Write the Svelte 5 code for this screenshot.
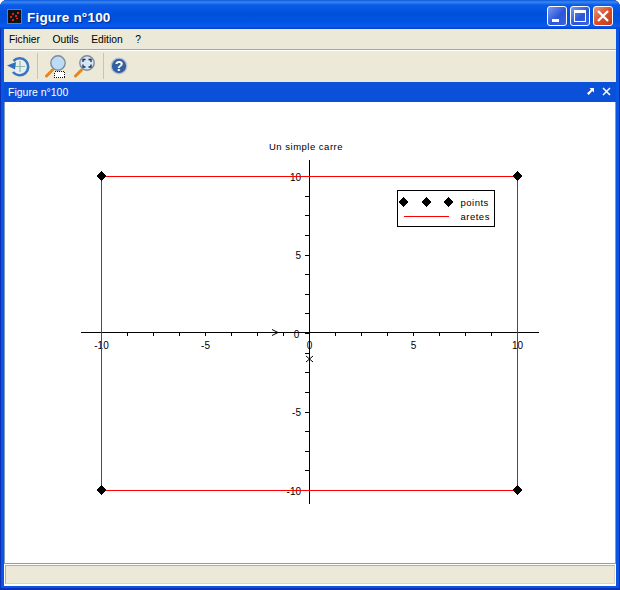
<script>
  const menus = ['Fichier', 'Outils', 'Edition', '?'];
  const X = (v) => 309.5 + v * 20.8;
  const Y = (v) => 333 - v * 15.7;
  const xTicks = [];
  const yTicks = [];
  for (let i = -8; i <= 8; i++) {
    xTicks.push(309 + i * 26);
    yTicks.push(Math.round(333 + i * 19.625));
  }
  const xLabels = [-10, -5, 0, 5, 10];
  const yLabels = [10, 5, 0, -5, -10];
  const corners = [[101, 176], [517, 176], [101, 490], [517, 490]];
  const legendPts = [403, 426, 448];
  const diamond = (x, y) => `${x},${y - 5} ${x + 4.7},${y} ${x},${y + 5} ${x - 4.7},${y}`;
</script>

<div class="window">
  <header class="titlebar">
    <svg class="appicon" viewBox="0 0 15 15" width="15" height="15">
      <rect width="15" height="15" fill="#111" />
      <rect x="0.5" y="0.5" width="14" height="14" fill="none" stroke="#778" />
      <g fill="#d22">
        <rect x="3" y="7" width="2" height="2" /><rect x="5" y="4" width="2" height="2" />
        <rect x="8" y="6" width="2" height="2" /><rect x="10" y="3" width="2" height="2" />
        <rect x="5" y="10" width="2" height="2" /><rect x="9" y="9" width="2" height="1" />
      </g>
    </svg>
    <span class="wintitle">Figure n°100</span>
    <div class="winbtns">
      <div class="wb blue">
        <svg viewBox="0 0 18 18" width="18" height="18"><rect x="4" y="12" width="7" height="3" fill="#fff" /></svg>
      </div>
      <div class="wb blue">
        <svg viewBox="0 0 18 18" width="18" height="18"><rect x="3.5" y="3.5" width="11" height="11" fill="none" stroke="#fff" /><rect x="3" y="3" width="12" height="3" fill="#fff" /></svg>
      </div>
      <div class="wb red">
        <svg viewBox="0 0 18 18" width="18" height="18"><path d="M4 4 L14 14 M14 4 L4 14" stroke="#fff" stroke-width="2.4" /></svg>
      </div>
    </div>
  </header>

  <div class="inner">
    <nav class="menubar">
      {#each menus as m}<span class="menu">{m}</span>{/each}
    </nav>

    <div class="toolbar">
      <svg class="tool undo" viewBox="0 0 23 23" width="23" height="23">
        <circle cx="13" cy="11.5" r="8" fill="#e6eff2" />
        <path d="M13 6v11M8 11.5h10" stroke="#8fb5a8" stroke-width="1.2" />
        <path d="M6.5 6 A8.5 8.5 0 1 1 6 17" fill="none" stroke="#3d74c0" stroke-width="2.6" />
        <path d="M0 10.5 L9 7 L8 14.5 Z" fill="#2e6ec0" />
      </svg>
      <div class="sep"></div>
      <svg class="tool mag" viewBox="0 0 22 24" width="22" height="24">
        <path d="M1.5 22 L7.5 16" stroke="#e8841c" stroke-width="3" stroke-linecap="round" />
        <circle cx="13" cy="9" r="7.2" fill="#bcdcf6" stroke="#7d8b98" stroke-width="1.4" />
        <rect x="9.5" y="17.5" width="10" height="6" fill="#fff" stroke="#111" stroke-dasharray="1 1" class="crisp" />
      </svg>
      <svg class="tool mag2" viewBox="0 0 22 24" width="22" height="24">
        <path d="M1.5 22 L7.5 16" stroke="#e8841c" stroke-width="3" stroke-linecap="round" />
        <circle cx="13" cy="9" r="7.2" fill="#d4e6f4" stroke="#7d8b98" stroke-width="1.4" />
        <path d="M9 8V5.5h2.5M14.5 5.5H17V8M17 10.5V13h-2.5M11.5 13H9v-2.5" fill="none" stroke="#14285a" stroke-width="1.3" />
      </svg>
      <div class="sep second"></div>
      <svg class="tool help" viewBox="0 0 18 18" width="18" height="18">
        <circle cx="9" cy="9" r="7.8" fill="#34609f" stroke="#b4c4d8" stroke-width="1.3" />
        <text x="9" y="14" class="q">?</text>
      </svg>
    </div>

    <div class="paneltitle">
      <span>Figure n°100</span>
      <div class="panelicons">
        <svg viewBox="0 0 8 8" width="7" height="7"><path d="M3 0h5v5L6 3.5 2 8 0 6l4.5-4z" fill="#fff" /></svg>
        <svg viewBox="0 0 9 9" width="9" height="9"><path d="M1 1l7 7M8 1L1 8" stroke="#fff" stroke-width="1.5" /></svg>
      </div>
    </div>

    <div class="canvas">
      <svg class="plot" width="610" height="461" viewBox="5 102 610 461">
        <g class="crisp" stroke="#000" fill="none">
          <path d="M81 332.5H539M309.5 160V504" />
          {#each xTicks as x}<path d="M{x + 0.5} 333v3" />{/each}
          {#each yTicks as y}<path d="M305 {y + 0.5}h4" />{/each}
        </g>
        <g>
          <text x="296.5" y="338" text-anchor="middle" class="n">0</text>
          <path class="arrow" d="M272 329.5l6 3-6 3M278 332.5h2" />
          {#each xLabels as v}
            <text x={X(v)} y="349" text-anchor="middle" class="n">{v}</text>
          {/each}
          {#each yLabels as v}
            {#if v !== 0}
              <text x="301" y={Y(v) + 4.5} text-anchor="end" class="n">{v}</text>
            {/if}
          {/each}
          <path class="arrow" d="M306 356l3.5 3 3.5-3M306 362l3.5-3 3.5 3" />
          <text x="306" y="150" text-anchor="middle" class="s">Un simple carre</text>
        </g>
        <rect class="crisp" x="101.5" y="176.5" width="416" height="314" fill="none" stroke="#f00" />
        {#each corners as c}
          <polygon class="crisp" points={diamond(c[0] + 0.5, c[1])} fill="#000" />
        {/each}
        <rect class="crisp" x="397.5" y="190.5" width="97" height="36" fill="#fff" stroke="#000" />
        {#each legendPts as x}
          <polygon class="crisp" points={diamond(x + 0.5, 202)} fill="#000" />
        {/each}
        <path class="crisp" d="M404 216.5h45" stroke="#f00" />
        <text x="460.5" y="206" class="s">points</text>
        <text x="460.5" y="220" class="s">aretes</text>
      </svg>
    </div>

    <div class="statusgap">
      <div class="status"></div>
    </div>
  </div>
</div>

<style>
  :global(body) {
    margin: 0;
    background: #fff;
  }
  .window {
    width: 620px;
    height: 590px;
    display: flex;
    flex-direction: column;
    font-family: "Liberation Sans", Arial, sans-serif;
    border-radius: 7px 7px 0 0;
    overflow: hidden;
    background: #0a55e4;
    box-shadow: inset 1px 0 #0831b8, inset -1px 0 #0831b8, inset 0 -2px #0831b8;
  }
  .titlebar {
    height: 29px;
    flex: none;
    display: flex;
    align-items: center;
    padding: 0 7px 0 7px;
    box-sizing: border-box;
    background: linear-gradient(180deg, #0a58dc 0, #3a86f0 2px, #0a5ce8 5px, #0050dc 14px, #0054e4 23px, #0a5cf0 26px, #0340c8 29px);
  }
  .appicon {
    flex: none;
    margin-right: 5px;
    margin-top: 3px;
  }
  .wintitle {
    color: #fff;
    font-size: 13.5px;
    font-weight: 700;
    text-shadow: 1px 1px 1px #0a2a90;
    letter-spacing: 0.2px;
    flex: 1;
    margin-top: 5px;
  }
  .winbtns {
    display: flex;
    gap: 3px;
    margin-top: 3px;
  }
  .wb {
    width: 20px;
    height: 20px;
    box-sizing: border-box;
    border: 1px solid #fff;
    border-radius: 3px;
    overflow: hidden;
    display: flex;
  }
  .wb.blue {
    background: linear-gradient(135deg, #7a9cf0, #2c56d8 55%, #3a64e0);
  }
  .wb.red {
    background: linear-gradient(135deg, #e89a80, #d8502c 50%, #c43a18);
  }
  .inner {
    flex: 1;
    min-height: 0;
    margin: 0 4px 4px 4px;
    display: flex;
    flex-direction: column;
    background: #ece9d8;
  }
  .menubar {
    height: 20px;
    flex: none;
    display: flex;
    align-items: center;
    gap: 12.5px;
    padding-left: 5px;
    font-size: 10.3px;
    color: #000;
    border-bottom: 1px solid #aca899;
    box-shadow: 0 1px 0 #fff;
    box-sizing: content-box;
  }
  .toolbar {
    height: 32px;
    flex: none;
    display: flex;
    align-items: center;
    padding-left: 3px;
    box-sizing: border-box;
  }
  .tool {
    flex: none;
  }
  .sep {
    width: 1px;
    height: 26px;
    background: #c8c4b4;
    margin: 0 7px 0 7px;
  }
  .sep.second {
    margin: 0 6px 0 7px;
  }
  .mag2 {
    margin-left: 7px;
  }
  .q {
    fill: #fff;
    font-size: 14px;
    font-weight: 700;
    text-anchor: middle;
    font-family: "Liberation Sans", sans-serif;
  }
  .paneltitle {
    height: 20px;
    flex: none;
    background: #0a50d8;
    color: #fff;
    font-size: 10.5px;
    display: flex;
    align-items: center;
    justify-content: space-between;
    padding: 0 5px 1px 4px;
    box-sizing: border-box;
  }
  .panelicons {
    display: flex;
    align-items: center;
    gap: 8px;
  }
  .canvas {
    flex: 1;
    min-height: 0;
    background: #fff;
    border-left: 1px solid #7f9db9;
    border-right: 1px solid #7f9db9;
    display: flex;
    overflow: hidden;
  }
  .plot {
    display: block;
    flex: none;
  }
  .crisp {
    shape-rendering: crispEdges;
  }
  .n {
    font-size: 10px;
    font-family: "Liberation Sans", sans-serif;
    fill: #000;
  }
  .s {
    font-size: 9.5px;
    font-family: "Liberation Sans", sans-serif;
    fill: #000;
    letter-spacing: 0.5px;
  }
  .arrow {
    fill: none;
    stroke: #000;
    stroke-width: 1;
  }
  .statusgap {
    height: 23px;
    flex: none;
    box-sizing: border-box;
    border-top: 1px solid #8a9cb0;
    padding: 1px 1px 2px 1px;
    background: #fff;
    display: flex;
  }
  .status {
    flex: 1;
    background: #ece9d8;
    border: 1px solid #b4b0a0;
    border-right-color: #d8d4c4;
    border-bottom-color: #d8d4c4;
  }
</style>
